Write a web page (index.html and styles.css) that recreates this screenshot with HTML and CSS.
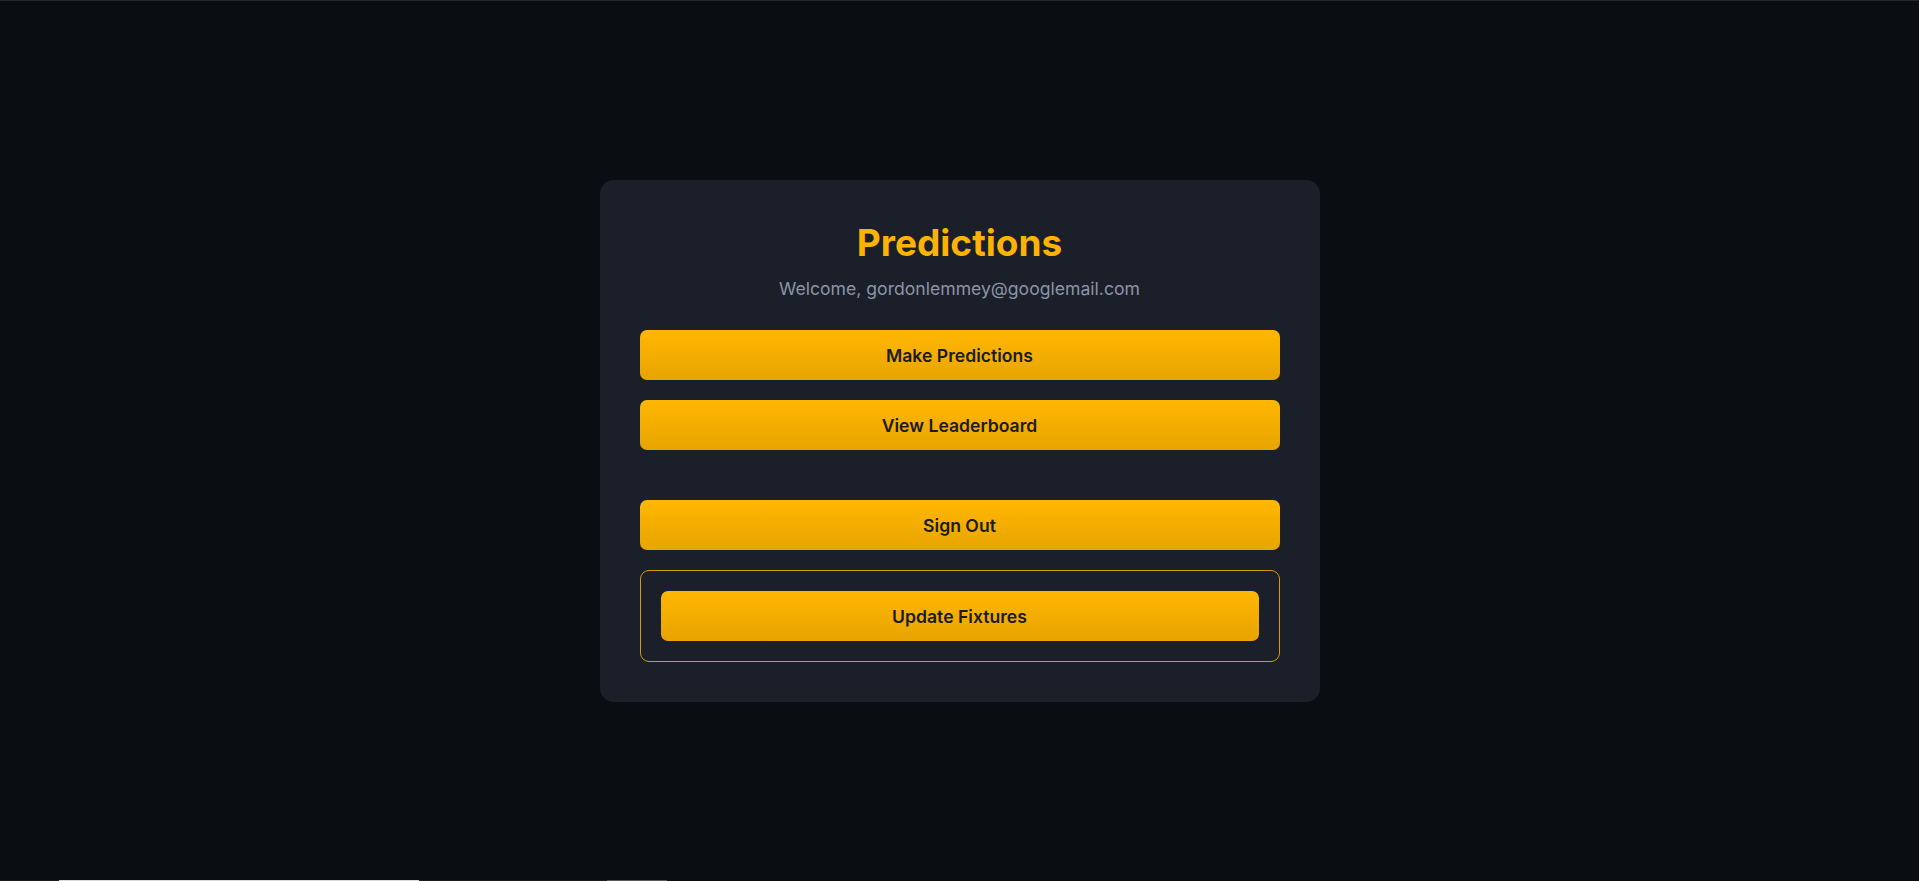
FILE: index.html
```html
<!DOCTYPE html>
<html lang="en">
<head>
<meta charset="utf-8">
<title>Predictions</title>
<link rel="stylesheet" href="styles.css">
</head>
<body>
<main class="page">
  <section class="card">
    <h1 class="title">Predictions</h1>
    <p class="welcome">Welcome, gordonlemmey@googlemail.com</p>
    <div class="actions">
      <button class="btn">Make Predictions</button>
      <button class="btn">View Leaderboard</button>
      <button class="btn btn-signout">Sign Out</button>
      <div class="admin-box">
        <button class="btn">Update Fixtures</button>
      </div>
    </div>
  </section>
</main>
<div class="bottom-strip">
  <span class="seg seg-a"></span><span class="seg seg-b"></span><span class="seg seg-c"></span><span class="seg seg-d"></span>
</div>
</body>
</html>
```

FILE: styles.css
```css
* { box-sizing: border-box; }

html, body {
  margin: 0;
  padding: 0;
  height: 100%;
}

body {
  background: #0a0d11;
  font-family: Inter, "Noto Sans", "Liberation Sans", sans-serif;
  border-top: 1px solid #24272b;
}

.page {
  min-height: calc(100vh - 1px);
  display: flex;
  align-items: center;
  justify-content: center;
}

.card {
  width: 720px;
  background: #1a1f29;
  border-radius: 14px;
  padding: 40px;
  text-align: center;
}

.title {
  margin: 0 0 13px;
  font-size: 37px;
  font-weight: 700;
  line-height: normal;
  color: #ffb300;
}

.welcome {
  margin: 0 0 31px;
  font-size: 17.6px;
  line-height: normal;
  color: #8b95a6;
}

.actions {
  display: flex;
  flex-direction: column;
  gap: 20px;
}

.btn {
  display: block;
  width: 100%;
  height: 50px;
  border: none;
  border-radius: 7px;
  background: linear-gradient(180deg, #ffb700 0%, #e8a400 100%);
  color: #1c1b17;
  font-family: inherit;
  font-size: 17.6px;
  font-weight: 600;
  cursor: pointer;
}

.btn-signout {
  margin-top: 30px;
}

.admin-box {
  border: 1px solid #d99a09;
  border-radius: 9px;
  padding: 20px;
}

.bottom-strip {
  position: fixed;
  left: 0;
  right: 0;
  bottom: 0;
  height: 1px;
  display: flex;
}

.seg { height: 1px; display: block; }
.seg-a { width: 59px; background: #1c1f16; }
.seg-b { width: 360px; background: #d9d9d9; }
.seg-c { width: 188px; background: #1c1f16; }
.seg-d { width: 60px; background: #5a5a5a; }
```
